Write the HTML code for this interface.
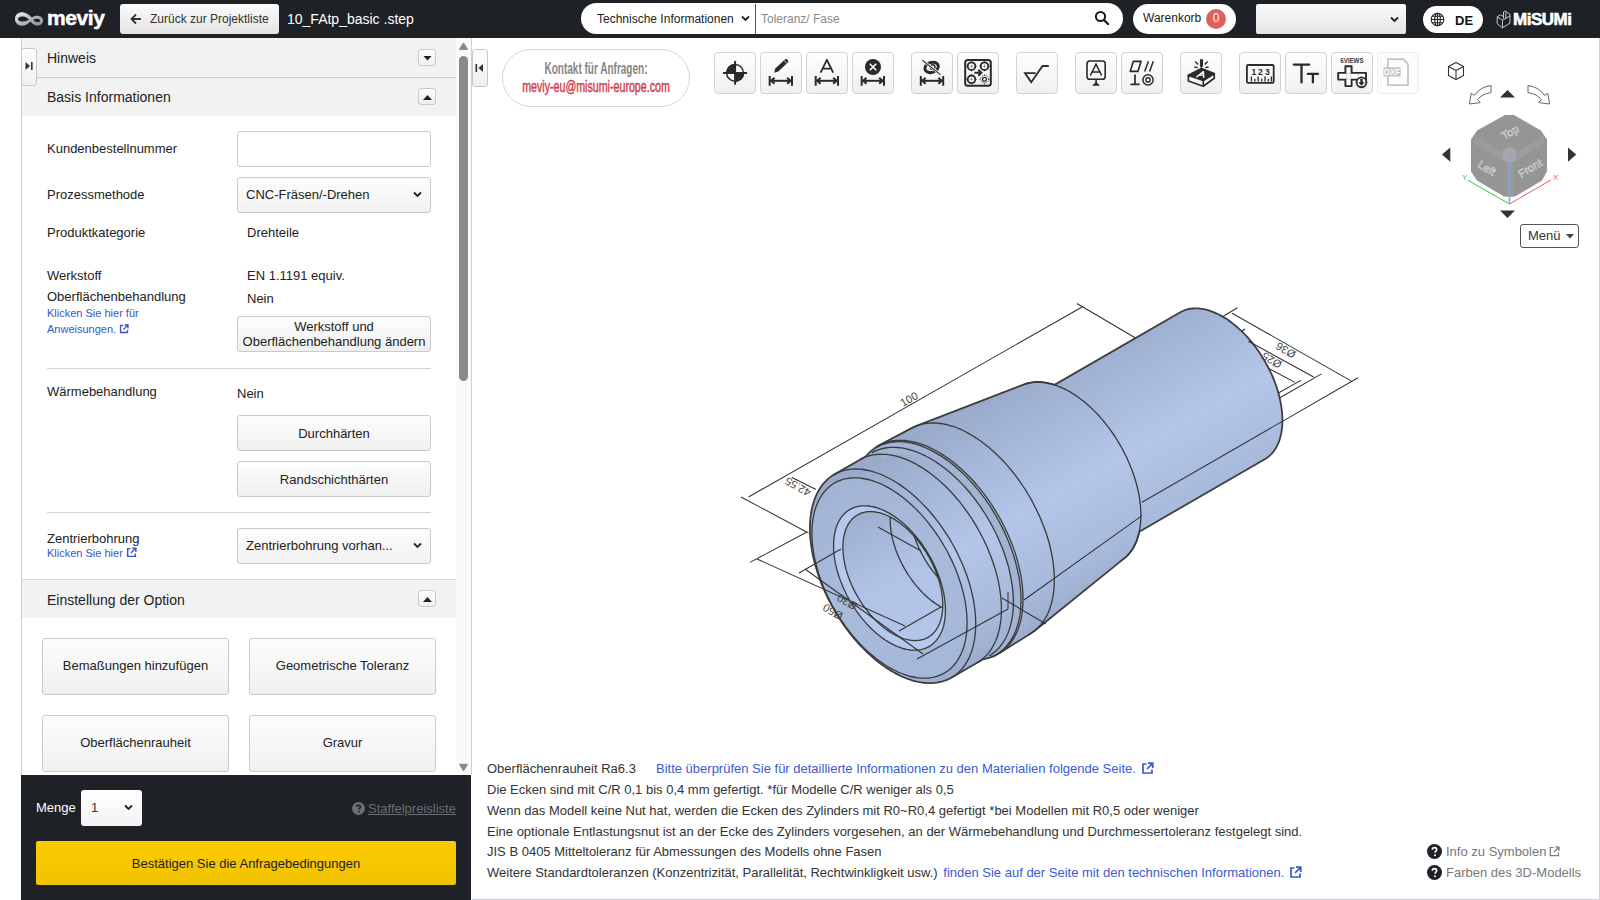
<!DOCTYPE html>
<html><head><meta charset="utf-8">
<style>
*{box-sizing:border-box;margin:0;padding:0}
html,body{width:1600px;height:900px;overflow:hidden;background:#fff;font-family:"Liberation Sans",sans-serif;font-size:13px;color:#222}
.a{position:absolute}
.t{position:absolute;white-space:nowrap;line-height:16px;margin-top:1px}
#hdr{left:0;top:0;width:1600px;height:38px;background:#1e2126}
.btn{position:absolute;border:1px solid #c9c9cf;border-radius:3px;background:linear-gradient(#fdfdfd,#f0f0f0);text-align:center;color:#222}
.sel{position:absolute;border:1px solid #c9c9d1;border-radius:3px;background:linear-gradient(#fdfdfd,#f1f1f1)}
.hl{position:absolute;height:1px;background:#d2d2d6}
.lnk{color:#3755c9}
</style></head><body>

<!-- HEADER -->
<div id="hdr" class="a">
  <!-- meviy logo -->
  <svg class="a" style="left:0;top:0" width="50" height="38" viewBox="0 0 50 38">
    <defs><linearGradient id="lg" x1="0" y1="0" x2="1" y2="1"><stop offset="0" stop-color="#f2f2f2"/><stop offset="0.5" stop-color="#b8b8b8"/><stop offset="1" stop-color="#8e8e8e"/></linearGradient></defs>
    <path fill-rule="evenodd" fill="url(#lg)" d="M15 19C15 13.5 20 11.5 24 12.5 28 13.5 30 16 32 17.5 34 16 36.5 15.5 39 16 42 16.8 43.5 19 43 21.5 42.5 24.5 39.5 26 36.5 25.5 33.5 25 32 23 30.5 21.5 28 24 25 26 21.5 25.8 17.5 25.5 15 22.5 15 19ZM18 19.3C18 17.3 20.5 16.4 23 16.6 25.5 16.8 27.5 18.3 29 19.6 27.5 20.8 25.5 21.6 23 21.6 20.5 21.6 18 21 18 19.3ZM33.2 19.8C34.7 18.8 36.6 18.6 38.5 19 40 19.4 40.5 20.5 39.8 21.5 39 22.3 37 22.4 35.5 21.8 34.5 21.4 33.8 20.6 33.2 19.8Z"/>
  </svg>
  <div class="t" style="left:47px;top:6px;font-size:21px;line-height:22px;font-weight:700;color:#fff;letter-spacing:-0.4px;-webkit-text-stroke:0.5px #fff">meviy</div>
  <div class="a" style="left:120px;top:4px;width:159px;height:30px;border-radius:3px;background:linear-gradient(#fbfbfb,#e3e3e3)"></div>
  <svg class="a" style="left:130px;top:13px" width="12" height="12" viewBox="0 0 12 12"><path d="M11 6H2M6 1.5L1.5 6 6 10.5" fill="none" stroke="#333" stroke-width="1.8"/></svg>
  <div class="t" style="left:150px;top:10px;font-size:12px;color:#333">Zurück zur Projektliste</div>
  <div class="t" style="left:287px;top:10px;font-size:14px;color:#fff">10_FAtp_basic .step</div>

  <!-- search -->
  <div class="a" style="left:581px;top:3px;width:542px;height:31px;border-radius:16px;background:#fff"></div>
  <div class="t" style="left:597px;top:10px;font-size:12px;color:#222">Technische Informationen</div>
  <svg class="a" style="left:741px;top:15px" width="9" height="7" viewBox="0 0 9 7"><path d="M1 1.5L4.5 5 8 1.5" fill="none" stroke="#222" stroke-width="1.8"/></svg>
  <div class="a" style="left:755px;top:4px;width:1px;height:30px;background:#555"></div>
  <div class="t" style="left:761px;top:10px;font-size:12px;color:#8a8a8a">Toleranz/ Fase</div>
  <svg class="a" style="left:1094px;top:10px" width="16" height="16" viewBox="0 0 16 16"><circle cx="6.5" cy="6.5" r="4.6" fill="none" stroke="#1b1b1b" stroke-width="2"/><path d="M10 10L14 14" stroke="#1b1b1b" stroke-width="2.4" stroke-linecap="round"/></svg>

  <!-- cart -->
  <div class="a" style="left:1133px;top:4px;width:103px;height:30px;border-radius:15px;background:#fff"></div>
  <div class="t" style="left:1143px;top:9px;font-size:12px;color:#222">Warenkorb</div>
  <div class="a" style="left:1206px;top:9px;width:20px;height:20px;border-radius:10px;background:#e06060"></div>
  <div class="t" style="left:1206px;top:9px;width:20px;text-align:center;font-size:12px;color:#fff">0</div>

  <!-- empty select -->
  <div class="a" style="left:1256px;top:4px;width:150px;height:30px;border-radius:2px;background:linear-gradient(#fafafa,#e4e4e4)"></div>
  <svg class="a" style="left:1390px;top:16px" width="9" height="7" viewBox="0 0 9 7"><path d="M1 1.5L4.5 5 8 1.5" fill="none" stroke="#222" stroke-width="1.8"/></svg>

  <!-- lang -->
  <div class="a" style="left:1423px;top:6px;width:60px;height:27px;border-radius:14px;background:#fff"></div>
  <svg class="a" style="left:1430px;top:12px" width="15" height="15" viewBox="0 0 15 15"><g fill="none" stroke="#222" stroke-width="1.1"><circle cx="7.5" cy="7.5" r="6.3"/><ellipse cx="7.5" cy="7.5" rx="2.8" ry="6.3"/><path d="M7.5 1.2V13.8M1.2 7.5H13.8M2.2 4.2H12.8M2.2 10.8H12.8"/></g></svg>
  <div class="t" style="left:1455px;top:12px;font-size:13px;font-weight:700;color:#111">DE</div>

  <!-- misumi -->
  <svg class="a" style="left:1490px;top:5px" width="24" height="28" viewBox="1490 5 24 28"><g fill="none" stroke="#d8d8d8" stroke-width="0.9" stroke-linejoin="round"><path d="M1497.2 16.9L1502.5 20.3 1510 15.8V23.1L1502.5 27.8 1497.2 23.8Z M1502.5 20.3V27.8 M1497.2 16.9L1500.6 14.8 1503.5 16.6 M1503.5 18.6V12L1505 11 1510 14.3V15.8 M1505.8 12.5V19"/></g></svg>
  <div class="t" style="left:1513px;top:10px;font-size:17px;line-height:18px;font-weight:700;color:#fff;letter-spacing:-0.5px;-webkit-text-stroke:0.6px #fff">MiSUMi</div>
</div>

<!-- LEFT PANEL -->
<div class="a" style="left:21px;top:38px;width:1px;height:862px;background:#cfcfd6"></div>
<div class="a" style="left:471px;top:38px;width:1px;height:737px;background:#cfcfdb"></div>
<div class="a" style="left:456px;top:38px;width:15px;height:737px;background:#fafafa"></div>
<!-- scrollbar -->
<svg class="a" style="left:456px;top:38px" width="15" height="737" viewBox="0 0 15 737">
  <path d="M3.8 11.2L7.5 5.5 11.2 11.2Z" fill="#8a8a8a" stroke="#8a8a8a" stroke-width="1.4" stroke-linejoin="round"/>
  <rect x="3" y="18" width="9" height="325" rx="4.5" fill="#8a8a8a"/>
  <path d="M3.8 726.5L7.5 732.5 11.2 726.5Z" fill="#8a8a8a" stroke="#8a8a8a" stroke-width="1.4" stroke-linejoin="round"/>
</svg>

<!-- Hinweis -->
<div class="a" style="left:22px;top:38px;width:434px;height:39px;background:#f2f2f2"></div>
<div class="hl" style="left:22px;top:77px;width:434px;background:#c9c9d3"></div>
<div class="a" style="left:22px;top:78px;width:434px;height:38px;background:#f2f2f2"></div>
<div class="t" style="left:47px;top:49px;font-size:14px;color:#222">Hinweis</div>
<div class="t" style="left:47px;top:88px;font-size:14px;color:#222">Basis Informationen</div>
<div class="btn" style="left:418px;top:49px;width:18px;height:17px;border-radius:3px"></div>
<svg class="a" style="left:423px;top:56px" width="9" height="5"><path d="M0.5 0H8.5L4.5 4.6Z" fill="#222"/></svg>
<div class="btn" style="left:418px;top:88px;width:18px;height:17px;border-radius:3px"></div>
<svg class="a" style="left:423px;top:95px" width="9" height="5"><path d="M0 5H9L4.5 0Z" fill="#222"/></svg>
<!-- sidebar toggle -->
<div class="btn" style="left:21px;top:48px;width:16px;height:38px;border-radius:3px;border-color:#c8c8c8"></div>
<svg class="a" style="left:25px;top:61px" width="9" height="10"><path d="M0.5 1L5 5 0.5 9Z" fill="#333"/><rect x="6" y="1" width="1.6" height="8" fill="#333"/></svg>

<!-- form -->
<div class="t" style="left:47px;top:140px">Kundenbestellnummer</div>
<div class="a" style="left:237px;top:131px;width:194px;height:36px;border:1px solid #c9c9d1;border-radius:3px;background:#fff"></div>
<div class="t" style="left:47px;top:186px">Prozessmethode</div>
<div class="sel" style="left:237px;top:177px;width:194px;height:36px"></div>
<div class="t" style="left:246px;top:186px">CNC-Fräsen/-Drehen</div>
<svg class="a" style="left:413px;top:191px" width="9" height="7" viewBox="0 0 9 7"><path d="M1 1.5L4.5 5 8 1.5" fill="none" stroke="#222" stroke-width="1.8"/></svg>
<div class="t" style="left:47px;top:224px">Produktkategorie</div>
<div class="t" style="left:247px;top:224px">Drehteile</div>
<div class="t" style="left:47px;top:267px">Werkstoff</div>
<div class="t" style="left:247px;top:267px">EN 1.1191 equiv.</div>
<div class="t" style="left:47px;top:288px">Oberflächenbehandlung</div>
<div class="t" style="left:247px;top:290px">Nein</div>
<div class="t lnk" style="left:47px;top:304px;font-size:11px">Klicken Sie hier für</div>
<div class="t lnk" style="left:47px;top:320px;font-size:11px">Anweisungen. <svg width="10" height="10" viewBox="0 0 10 10" style="vertical-align:-1px"><path d="M4 1.5H1.5V8.5H8.5V6M5.5 1H9V4.5M9 1L4.5 5.5" fill="none" stroke="#3755c9" stroke-width="1.3"/></svg></div>
<div class="btn" style="left:237px;top:316px;width:194px;height:36px"></div>
<div class="t" style="left:237px;top:318px;width:194px;text-align:center;line-height:15px;white-space:normal">Werkstoff und<br>Oberflächenbehandlung ändern</div>
<div class="hl" style="left:47px;top:368px;width:384px"></div>

<div class="t" style="left:47px;top:383px">Wärmebehandlung</div>
<div class="t" style="left:237px;top:385px">Nein</div>
<div class="btn" style="left:237px;top:415px;width:194px;height:36px"></div>
<div class="t" style="left:237px;top:425px;width:194px;text-align:center">Durchhärten</div>
<div class="btn" style="left:237px;top:461px;width:194px;height:36px"></div>
<div class="t" style="left:237px;top:471px;width:194px;text-align:center">Randschichthärten</div>
<div class="hl" style="left:47px;top:512px;width:384px"></div>

<div class="t" style="left:47px;top:530px">Zentrierbohrung</div>
<div class="t lnk" style="left:47px;top:544px;font-size:11px">Klicken Sie hier <svg width="11" height="11" viewBox="0 0 10 10" style="vertical-align:-1px"><path d="M4 1.5H1.5V8.5H8.5V6M5.5 1H9V4.5M9 1L4.5 5.5" fill="none" stroke="#3755c9" stroke-width="1.3"/></svg></div>
<div class="sel" style="left:237px;top:528px;width:194px;height:36px"></div>
<div class="t" style="left:246px;top:537px">Zentrierbohrung vorhan...</div>
<svg class="a" style="left:413px;top:542px" width="9" height="7" viewBox="0 0 9 7"><path d="M1 1.5L4.5 5 8 1.5" fill="none" stroke="#222" stroke-width="1.8"/></svg>

<div class="hl" style="left:22px;top:579px;width:434px;background:#d8d8dd"></div>
<div class="a" style="left:22px;top:580px;width:434px;height:38px;background:#f2f2f2"></div>
<div class="t" style="left:47px;top:591px;font-size:14px">Einstellung der Option</div>
<div class="btn" style="left:418px;top:590px;width:18px;height:17px;border-radius:3px"></div>
<svg class="a" style="left:423px;top:597px" width="9" height="5"><path d="M0 5H9L4.5 0Z" fill="#222"/></svg>

<div class="btn" style="left:42px;top:638px;width:187px;height:57px"></div>
<div class="t" style="left:42px;top:657px;width:187px;text-align:center">Bemaßungen hinzufügen</div>
<div class="btn" style="left:249px;top:638px;width:187px;height:57px"></div>
<div class="t" style="left:249px;top:657px;width:187px;text-align:center">Geometrische Toleranz</div>
<div class="btn" style="left:42px;top:715px;width:187px;height:57px"></div>
<div class="t" style="left:42px;top:734px;width:187px;text-align:center">Oberflächenrauheit</div>
<div class="btn" style="left:249px;top:715px;width:187px;height:57px"></div>
<div class="t" style="left:249px;top:734px;width:187px;text-align:center">Gravur</div>

<!-- footer -->
<div class="a" style="left:21px;top:775px;width:450px;height:125px;background:#1e2126"></div>
<div class="t" style="left:36px;top:799px;color:#fff">Menge</div>
<div class="a" style="left:81px;top:790px;width:61px;height:36px;border-radius:3px;background:linear-gradient(#fff,#f3f3f3)"></div>
<div class="t" style="left:91px;top:799px;color:#333">1</div>
<svg class="a" style="left:124px;top:804px" width="9" height="7" viewBox="0 0 9 7"><path d="M1 1.5L4.5 5 8 1.5" fill="none" stroke="#222" stroke-width="1.8"/></svg>
<svg class="a" style="left:352px;top:802px" width="13" height="13" viewBox="0 0 13 13"><circle cx="6.5" cy="6.5" r="6.5" fill="#6b6e72"/><path d="M4.6 5C4.6 3.8 5.5 3.2 6.5 3.2 7.6 3.2 8.4 3.9 8.4 4.9 8.4 6.1 6.9 6.2 6.9 7.6" fill="none" stroke="#1e2126" stroke-width="1.5"/><circle cx="6.9" cy="9.6" r="0.9" fill="#1e2126"/></svg>
<div class="t" style="left:368px;top:800px;color:#6b6e72;text-decoration:underline">Staffelpreisliste</div>
<div class="a" style="left:36px;top:841px;width:420px;height:44px;border-radius:2px;background:linear-gradient(#fdca00,#f0c300)"></div>
<div class="t" style="left:36px;top:855px;width:420px;text-align:center;color:#222">Bestätigen Sie die Anfragebedingungen</div>

<!-- VIEWER -->
<svg class="a" style="left:0;top:0" width="1600" height="900" viewBox="0 0 1600 900">
<defs>
<linearGradient id="bodyg" gradientUnits="userSpaceOnUse" x1="996.1" y1="378.1" x2="1115.9" y2="585.7"><stop offset="0" stop-color="#97a8c8"/><stop offset="0.3" stop-color="#a7b9da"/><stop offset="0.55" stop-color="#b3c6e9"/><stop offset="0.85" stop-color="#a8badb"/><stop offset="1" stop-color="#9aabcb"/></linearGradient>
<linearGradient id="faceg" gradientUnits="userSpaceOnUse" x1="816.2" y1="451.1" x2="962.8" y2="704.9"><stop offset="0" stop-color="#a0b1d1"/><stop offset="0.5" stop-color="#a9bbdc"/><stop offset="1" stop-color="#a4b6d7"/></linearGradient>
<linearGradient id="boreg" gradientUnits="userSpaceOnUse" x1="842.9" y1="497.3" x2="936.1" y2="658.7"><stop offset="0" stop-color="#98a9c9"/><stop offset="0.5" stop-color="#b0c3e6"/><stop offset="1" stop-color="#b4c7ea"/></linearGradient>
<clipPath id="boreclip"><path d="M842.9 547.2 842.9 545.2 843.0 543.3 843.2 541.4 843.4 539.5 843.6 537.7 844.0 535.9 844.4 534.1 844.8 532.5 845.3 530.8 845.9 529.3 846.5 527.7 847.2 526.3 847.9 524.9 848.7 523.5 849.6 522.3 850.5 521.1 851.4 519.9 852.4 518.8 853.5 517.8 854.6 516.9 855.7 516.1 856.9 515.3 858.1 514.6 859.4 513.9 860.7 513.4 862.1 512.9 863.5 512.5 864.9 512.1 866.4 511.9 867.9 511.7 869.4 511.6 870.9 511.6 872.5 511.7 874.1 511.8 875.7 512.0 877.4 512.3 879.1 512.7 880.7 513.1 882.4 513.7 884.2 514.3 885.9 515.0 887.6 515.7 889.3 516.5 891.1 517.4 892.8 518.4 894.6 519.4 896.3 520.6 898.1 521.7 899.8 523.0 901.5 524.3 903.2 525.7 904.9 527.1 906.6 528.6 908.3 530.1 909.9 531.7 911.5 533.4 913.1 535.1 914.7 536.9 916.3 538.7 917.8 540.5 919.3 542.4 920.8 544.4 922.2 546.4 923.6 548.4 924.9 550.4 926.3 552.5 927.5 554.6 928.8 556.8 929.9 558.9 931.1 561.1 932.2 563.3 933.2 565.5 934.2 567.7 935.2 570.0 936.1 572.2 936.9 574.5 937.7 576.7 938.5 579.0 939.1 581.2 939.8 583.4 940.3 585.7 940.8 587.9 941.3 590.1 941.7 592.3 942.0 594.5 942.3 596.6 942.5 598.7 942.7 600.8 942.7 602.9 942.8 604.9 942.7 606.9 942.7 608.9 942.5 610.8 942.3 612.7 942.0 614.5 941.7 616.3 941.3 618.0 940.8 619.7 940.3 621.3 939.8 622.9 939.1 624.4 938.5 625.9 937.7 627.3 936.9 628.6 936.1 629.9 935.2 631.1 934.2 632.2 933.2 633.3 932.2 634.3 931.1 635.2 929.9 636.1 928.8 636.9 927.5 637.6 926.3 638.2 924.9 638.8 923.6 639.3 922.2 639.7 920.8 640.0 919.3 640.3 917.8 640.4 916.3 640.5 914.7 640.6 913.1 640.5 911.5 640.4 909.9 640.1 908.3 639.8 906.6 639.5 904.9 639.0 903.2 638.5 901.5 637.9 899.8 637.2 898.1 636.5 896.3 635.6 894.6 634.7 892.8 633.8 891.1 632.7 889.3 631.6 887.6 630.4 885.9 629.2 884.2 627.9 882.4 626.5 880.7 625.1 879.1 623.6 877.4 622.0 875.7 620.4 874.1 618.8 872.5 617.0 870.9 615.3 869.4 613.5 867.9 611.6 866.4 609.7 864.9 607.8 863.5 605.8 862.1 603.8 860.7 601.7 859.4 599.6 858.1 597.5 856.9 595.4 855.7 593.2 854.6 591.1 853.5 588.9 852.4 586.6 851.4 584.4 850.5 582.2 849.6 579.9 848.7 577.7 847.9 575.4 847.2 573.2 846.5 570.9 845.9 568.7 845.3 566.5 844.8 564.3 844.4 562.0 844.0 559.9 843.6 557.7 843.4 555.5 843.2 553.4 843.0 551.3 842.9 549.3 842.9 547.2Z"/></clipPath>
</defs>
<path d="M1190.7 308.7 1189.0 309.0 1187.3 309.4 1185.6 309.9 1184.0 310.5 1182.4 311.2 1180.9 311.9 1179.4 312.8 1054.5 384.9 1052.4 384.2 1050.0 383.6 1047.6 383.0 1045.3 382.6 1043.0 382.3 1040.7 382.1 1038.4 382.0 1036.2 382.0 1034.0 382.2 1031.9 382.4 1029.8 382.8 1027.8 383.2 1025.8 383.8 1023.8 384.5 916.5 425.9 914.3 426.9 912.1 427.9 879.1 445.3 877.0 446.6 875.0 447.9 873.1 449.4 871.2 450.9 869.4 452.6 868.0 454.0 866.3 455.8 866.0 456.2 833.2 475.1 831.2 476.4 829.3 477.9 827.5 479.4 825.8 481.1 824.1 482.9 822.5 484.7 821.0 486.8 819.6 488.9 818.3 491.1 817.1 493.4 816.0 495.8 814.9 498.3 814.0 501.0 813.1 503.7 812.4 506.5 811.7 509.3 811.2 512.3 810.7 515.3 810.4 518.5 810.1 521.6 810.0 524.9 809.9 528.2 810.0 531.6 810.1 535.0 810.4 538.5 810.7 542.0 811.2 545.6 811.7 549.2 812.4 552.8 813.1 556.5 814.0 560.1 814.9 563.8 816.0 567.6 817.1 571.3 818.3 575.0 819.6 578.8 821.0 582.5 822.5 586.2 824.1 589.9 825.8 593.6 827.5 597.3 829.3 600.9 831.2 604.6 833.2 608.1 835.2 611.7 837.3 615.2 839.5 618.6 841.8 622.1 844.1 625.4 846.5 628.7 848.9 631.9 851.4 635.1 853.9 638.1 856.5 641.1 859.1 644.1 861.8 646.9 864.5 649.7 867.2 652.3 870.0 654.9 872.8 657.4 875.6 659.8 878.4 662.1 881.3 664.2 884.2 666.3 887.0 668.2 889.9 670.1 892.8 671.8 895.7 673.4 898.6 674.9 901.5 676.3 904.4 677.5 907.2 678.7 910.1 679.7 912.9 680.6 915.7 681.3 918.5 681.9 921.2 682.4 923.9 682.8 926.6 683.0 929.2 683.1 931.8 683.1 934.3 682.9 936.8 682.6 939.2 682.2 941.6 681.7 943.9 681.0 946.1 680.2 948.3 679.3 950.4 678.2 983.2 659.3 983.7 659.2 986.2 658.6 988.0 658.1 990.4 657.4 992.7 656.6 994.9 655.6 997.1 654.5 999.2 653.3 1030.8 633.4 1032.8 632.1 1034.7 630.7 1124.2 558.4 1125.8 557.1 1127.3 555.6 1128.7 554.1 1130.1 552.5 1131.4 550.8 1132.6 548.9 1133.7 547.0 1134.7 545.0 1135.7 543.0 1136.6 540.8 1137.4 538.5 1138.1 536.2 1138.8 533.8 1139.3 531.7 1265.6 458.7 1267.0 457.8 1268.4 456.7 1269.7 455.6 1271.0 454.4 1272.2 453.1 1273.3 451.8 1274.4 450.3 1275.4 448.8 1276.4 447.2 1277.2 445.5 1278.1 443.8 1278.8 441.9 1279.5 440.0 1280.1 438.1 1280.6 436.1 1281.1 434.0 1281.5 431.8 1281.8 429.7 1282.1 427.4 1282.3 425.1 1282.4 422.7 1282.4 420.4 1282.4 417.9 1282.3 415.4 1282.1 412.9 1281.8 410.4 1281.5 407.8 1281.1 405.2 1280.6 402.6 1280.1 399.9 1279.5 397.3 1278.8 394.6 1278.1 391.9 1277.2 389.2 1276.4 386.5 1275.4 383.8 1274.4 381.1 1273.3 378.4 1272.2 375.7 1271.0 373.1 1269.7 370.4 1268.4 367.8 1267.0 365.2 1265.6 362.6 1264.1 360.0 1262.6 357.5 1261.0 355.0 1259.4 352.5 1257.7 350.1 1256.0 347.7 1254.2 345.4 1252.5 343.1 1250.6 340.9 1248.8 338.7 1246.9 336.6 1244.9 334.5 1243.0 332.5 1241.0 330.6 1239.0 328.8 1237.0 327.0 1234.9 325.2 1232.9 323.6 1230.8 322.0 1228.8 320.5 1226.7 319.1 1224.6 317.8 1222.5 316.5 1220.4 315.4 1218.3 314.3 1216.2 313.3 1214.1 312.4 1212.1 311.6 1210.0 310.9 1208.0 310.2 1206.0 309.7 1204.0 309.2 1202.0 308.9 1200.0 308.6 1198.1 308.4 1196.2 308.4 1194.3 308.4 1192.5 308.5 1190.7 308.7Z" fill="url(#bodyg)"/>
<path d="M876.6 447.3 878.8 446.2 881.0 445.1 883.2 444.3 885.6 443.5 887.9 442.9 890.4 442.4 892.9 442.0 895.4 441.8 898.1 441.7 900.7 441.7 903.4 441.9 906.1 442.2 908.9 442.7 911.7 443.2 914.6 443.9 917.4 444.7 920.3 445.7 923.2 446.8 926.1 448.0 929.1 449.3 932.0 450.8 935.0 452.4 937.9 454.1 940.9 455.9 943.8 457.9 946.8 459.9 949.7 462.1 952.6 464.3 955.5 466.7 958.3 469.2 961.2 471.8 964.0 474.4 966.8 477.2 969.5 480.1 972.2 483.0 974.8 486.0 977.5 489.1 980.0 492.3 982.5 495.6 985.0 498.9 987.4 502.3 989.7 505.7 991.9 509.2 994.1 512.8 996.3 516.4 998.3 520.0 1000.3 523.7 1002.2 527.4 1004.0 531.1 1005.7 534.9 1007.4 538.7 1008.9 542.4 1010.4 546.3 1011.8 550.1 1013.1 553.9 1014.3 557.7 1015.4 561.5 1016.4 565.3 1017.3 569.0 1018.1 572.8 1018.9 576.5 1019.5 580.2 1020.0 583.8 1020.4 587.5 1020.7 591.0 1020.9 594.5 1021.0 598.0 1021.0 601.4 1020.9 604.8 1020.7 608.1 1020.4 611.3 1020.0 614.4 1019.5 617.5 1018.9 620.4 1018.1 623.3 1017.3 626.1 1016.4 628.9 1015.4 631.5 1014.3 634.0 1013.1 636.4 1011.8 638.7 1010.4 640.9 1008.9 643.0 1007.4 645.0 1005.7 646.9 1004.0 648.7 1002.2 650.3 1000.3 651.8 998.3 653.2 996.3 654.5 989.4 642.7 991.2 641.5 993.0 640.3 994.7 639.0 996.3 637.5 997.8 635.9 999.3 634.3 1000.7 632.5 1002.0 630.7 1003.2 628.7 1004.4 626.7 1005.4 624.5 1006.4 622.3 1007.3 620.0 1008.1 617.6 1008.8 615.1 1009.5 612.5 1010.0 609.9 1010.5 607.1 1010.8 604.4 1011.1 601.5 1011.3 598.6 1011.4 595.7 1011.4 592.6 1011.3 589.6 1011.1 586.4 1010.8 583.3 1010.5 580.1 1010.0 576.8 1009.5 573.6 1008.8 570.3 1008.1 567.0 1007.3 563.6 1006.4 560.3 1005.4 556.9 1004.4 553.5 1003.2 550.2 1002.0 546.8 1000.7 543.4 999.3 540.1 997.8 536.7 996.3 533.4 994.7 530.1 993.0 526.8 991.2 523.5 989.4 520.3 987.5 517.1 985.6 514.0 983.6 510.9 981.5 507.8 979.4 504.8 977.3 501.9 975.0 499.0 972.8 496.2 970.5 493.4 968.1 490.8 965.7 488.2 963.3 485.6 960.8 483.2 958.4 480.8 955.8 478.5 953.3 476.3 950.7 474.2 948.2 472.2 945.6 470.3 943.0 468.5 940.4 466.8 937.8 465.1 935.1 463.6 932.5 462.2 929.9 460.9 927.3 459.8 924.7 458.7 922.2 457.7 919.6 456.9 917.1 456.1 914.5 455.5 912.1 455.0 909.6 454.6 907.2 454.4 904.8 454.2 902.4 454.2 900.1 454.3 897.9 454.5 895.6 454.8 893.5 455.2 891.4 455.8 889.3 456.4 887.3 457.2 885.4 458.1 883.5 459.1 876.6 447.3Z" fill="#a2b3d3"/>
<path d="M811.9 533.2 812.0 530.1 812.1 527.1 812.3 524.1 812.7 521.2 813.1 518.3 813.6 515.6 814.2 512.9 814.9 510.2 815.7 507.7 816.6 505.3 817.6 502.9 818.6 500.6 819.8 498.5 821.0 496.4 822.3 494.4 823.7 492.5 825.2 490.8 826.7 489.1 828.4 487.5 830.1 486.1 831.8 484.8 833.7 483.5 835.6 482.4 837.6 481.4 839.6 480.6 841.7 479.8 843.9 479.2 846.1 478.7 848.4 478.3 850.7 478.0 853.1 477.9 855.5 477.8 857.9 477.9 860.4 478.2 863.0 478.5 865.5 479.0 868.1 479.5 870.7 480.2 873.4 481.1 876.0 482.0 878.7 483.0 881.4 484.2 884.1 485.5 886.8 486.9 889.5 488.4 892.2 490.0 894.9 491.8 897.6 493.6 900.3 495.5 903.0 497.6 905.6 499.7 908.3 501.9 910.9 504.2 913.5 506.6 916.0 509.1 918.6 511.7 921.1 514.4 923.5 517.1 925.9 519.9 928.3 522.8 930.6 525.8 932.9 528.8 935.1 531.9 937.3 535.0 939.4 538.2 941.4 541.4 943.4 544.7 945.3 548.0 947.2 551.3 948.9 554.7 950.6 558.1 952.3 561.6 953.8 565.0 955.3 568.5 956.7 572.0 958.0 575.5 959.2 579.0 960.4 582.5 961.4 586.0 962.4 589.5 963.3 592.9 964.1 596.4 964.8 599.8 965.4 603.2 965.9 606.6 966.3 609.9 966.7 613.2 966.9 616.4 967.0 619.6 967.1 622.8 967.0 625.9 966.9 628.9 966.7 631.9 966.3 634.8 965.9 637.7 965.4 640.4 964.8 643.1 964.1 645.8 963.3 648.3 962.4 650.7 961.4 653.1 960.4 655.4 959.2 657.5 958.0 659.6 956.7 661.6 955.3 663.5 953.8 665.2 952.3 666.9 950.6 668.5 948.9 669.9 947.2 671.2 945.3 672.5 943.4 673.6 941.4 674.6 939.4 675.4 937.3 676.2 935.1 676.8 932.9 677.3 930.6 677.7 928.3 678.0 925.9 678.1 923.5 678.2 921.1 678.1 918.6 677.8 916.0 677.5 913.5 677.0 910.9 676.5 908.3 675.8 905.6 674.9 903.0 674.0 900.3 673.0 897.6 671.8 894.9 670.5 892.2 669.1 889.5 667.6 886.8 666.0 884.1 664.2 881.4 662.4 878.7 660.5 876.0 658.4 873.4 656.3 870.7 654.1 868.1 651.8 865.5 649.4 863.0 646.9 860.4 644.3 857.9 641.6 855.5 638.9 853.1 636.1 850.7 633.2 848.4 630.2 846.1 627.2 843.9 624.1 841.7 621.0 839.6 617.8 837.6 614.6 835.6 611.3 833.7 608.0 831.8 604.7 830.1 601.3 828.4 597.9 826.7 594.4 825.2 591.0 823.7 587.5 822.3 584.0 821.0 580.5 819.8 577.0 818.6 573.5 817.6 570.0 816.6 566.5 815.7 563.1 814.9 559.6 814.2 556.2 813.6 552.8 813.1 549.4 812.7 546.1 812.3 542.8 812.1 539.6 812.0 536.4 811.9 533.2Z" fill="url(#faceg)"/>
<path d="M833.6 545.7 833.6 543.5 833.7 541.3 833.9 539.1 834.1 537.0 834.4 535.0 834.8 533.0 835.2 531.0 835.7 529.1 836.3 527.3 836.9 525.6 837.6 523.9 838.4 522.2 839.2 520.7 840.1 519.2 841.1 517.7 842.1 516.4 843.1 515.1 844.2 513.9 845.4 512.8 846.6 511.7 847.9 510.8 849.3 509.9 850.6 509.1 852.1 508.4 853.5 507.8 855.1 507.2 856.6 506.8 858.2 506.4 859.9 506.1 861.5 505.9 863.2 505.8 865.0 505.8 866.7 505.9 868.5 506.0 870.4 506.3 872.2 506.6 874.1 507.0 876.0 507.5 877.9 508.1 879.8 508.8 881.7 509.5 883.7 510.4 885.6 511.3 887.5 512.3 889.5 513.4 891.5 514.6 893.4 515.8 895.3 517.1 897.3 518.5 899.2 520.0 901.1 521.5 903.0 523.1 904.9 524.8 906.8 526.5 908.6 528.3 910.5 530.2 912.3 532.1 914.0 534.1 915.8 536.1 917.5 538.2 919.1 540.3 920.8 542.5 922.4 544.7 923.9 547.0 925.5 549.3 926.9 551.6 928.4 554.0 929.7 556.4 931.1 558.8 932.4 561.2 933.6 563.7 934.8 566.2 935.9 568.7 936.9 571.2 937.9 573.7 938.9 576.2 939.8 578.7 940.6 581.2 941.4 583.7 942.1 586.3 942.7 588.8 943.3 591.2 943.8 593.7 944.2 596.2 944.6 598.6 944.9 601.0 945.1 603.4 945.3 605.7 945.4 608.0 945.4 610.3 945.4 612.5 945.3 614.7 945.1 616.9 944.9 619.0 944.6 621.0 944.2 623.0 943.8 625.0 943.3 626.9 942.7 628.7 942.1 630.4 941.4 632.1 940.6 633.8 939.8 635.3 938.9 636.8 937.9 638.3 936.9 639.6 935.9 640.9 934.8 642.1 933.6 643.2 932.4 644.3 931.1 645.2 929.7 646.1 928.4 646.9 926.9 647.6 925.5 648.2 923.9 648.8 922.4 649.2 920.8 649.6 919.1 649.9 917.5 650.1 915.8 650.2 914.0 650.2 912.3 650.1 910.5 650.0 908.6 649.7 906.8 649.4 904.9 649.0 903.0 648.5 901.1 647.9 899.2 647.2 897.3 646.5 895.3 645.6 893.4 644.7 891.5 643.7 889.5 642.6 887.5 641.4 885.6 640.2 883.7 638.9 881.7 637.5 879.8 636.0 877.9 634.5 876.0 632.9 874.1 631.2 872.2 629.5 870.4 627.7 868.5 625.8 866.7 623.9 865.0 621.9 863.2 619.9 861.5 617.8 859.9 615.7 858.2 613.5 856.6 611.3 855.1 609.0 853.5 606.7 852.1 604.4 850.6 602.0 849.3 599.6 847.9 597.2 846.6 594.8 845.4 592.3 844.2 589.8 843.1 587.3 842.1 584.8 841.1 582.3 840.1 579.8 839.2 577.3 838.4 574.8 837.6 572.3 836.9 569.7 836.3 567.2 835.7 564.8 835.2 562.3 834.8 559.8 834.4 557.4 834.1 555.0 833.9 552.6 833.7 550.3 833.6 548.0 833.6 545.7Z" fill="#b6c9ec"/>
<path d="M842.9 547.2 842.9 545.2 843.0 543.3 843.2 541.4 843.4 539.5 843.6 537.7 844.0 535.9 844.4 534.1 844.8 532.5 845.3 530.8 845.9 529.3 846.5 527.7 847.2 526.3 847.9 524.9 848.7 523.5 849.6 522.3 850.5 521.1 851.4 519.9 852.4 518.8 853.5 517.8 854.6 516.9 855.7 516.1 856.9 515.3 858.1 514.6 859.4 513.9 860.7 513.4 862.1 512.9 863.5 512.5 864.9 512.1 866.4 511.9 867.9 511.7 869.4 511.6 870.9 511.6 872.5 511.7 874.1 511.8 875.7 512.0 877.4 512.3 879.1 512.7 880.7 513.1 882.4 513.7 884.2 514.3 885.9 515.0 887.6 515.7 889.3 516.5 891.1 517.4 892.8 518.4 894.6 519.4 896.3 520.6 898.1 521.7 899.8 523.0 901.5 524.3 903.2 525.7 904.9 527.1 906.6 528.6 908.3 530.1 909.9 531.7 911.5 533.4 913.1 535.1 914.7 536.9 916.3 538.7 917.8 540.5 919.3 542.4 920.8 544.4 922.2 546.4 923.6 548.4 924.9 550.4 926.3 552.5 927.5 554.6 928.8 556.8 929.9 558.9 931.1 561.1 932.2 563.3 933.2 565.5 934.2 567.7 935.2 570.0 936.1 572.2 936.9 574.5 937.7 576.7 938.5 579.0 939.1 581.2 939.8 583.4 940.3 585.7 940.8 587.9 941.3 590.1 941.7 592.3 942.0 594.5 942.3 596.6 942.5 598.7 942.7 600.8 942.7 602.9 942.8 604.9 942.7 606.9 942.7 608.9 942.5 610.8 942.3 612.7 942.0 614.5 941.7 616.3 941.3 618.0 940.8 619.7 940.3 621.3 939.8 622.9 939.1 624.4 938.5 625.9 937.7 627.3 936.9 628.6 936.1 629.9 935.2 631.1 934.2 632.2 933.2 633.3 932.2 634.3 931.1 635.2 929.9 636.1 928.8 636.9 927.5 637.6 926.3 638.2 924.9 638.8 923.6 639.3 922.2 639.7 920.8 640.0 919.3 640.3 917.8 640.4 916.3 640.5 914.7 640.6 913.1 640.5 911.5 640.4 909.9 640.1 908.3 639.8 906.6 639.5 904.9 639.0 903.2 638.5 901.5 637.9 899.8 637.2 898.1 636.5 896.3 635.6 894.6 634.7 892.8 633.8 891.1 632.7 889.3 631.6 887.6 630.4 885.9 629.2 884.2 627.9 882.4 626.5 880.7 625.1 879.1 623.6 877.4 622.0 875.7 620.4 874.1 618.8 872.5 617.0 870.9 615.3 869.4 613.5 867.9 611.6 866.4 609.7 864.9 607.8 863.5 605.8 862.1 603.8 860.7 601.7 859.4 599.6 858.1 597.5 856.9 595.4 855.7 593.2 854.6 591.1 853.5 588.9 852.4 586.6 851.4 584.4 850.5 582.2 849.6 579.9 848.7 577.7 847.9 575.4 847.2 573.2 846.5 570.9 845.9 568.7 845.3 566.5 844.8 564.3 844.4 562.0 844.0 559.9 843.6 557.7 843.4 555.5 843.2 553.4 843.0 551.3 842.9 549.3 842.9 547.2Z" fill="url(#boreg)"/>
<path d="M1190.7 308.7 1189.0 309.0 1187.3 309.4 1185.6 309.9 1184.0 310.5 1182.4 311.2 1180.9 311.9 1179.4 312.8 1054.5 384.9 1052.4 384.2 1050.0 383.6 1047.6 383.0 1045.3 382.6 1043.0 382.3 1040.7 382.1 1038.4 382.0 1036.2 382.0 1034.0 382.2 1031.9 382.4 1029.8 382.8 1027.8 383.2 1025.8 383.8 1023.8 384.5 916.5 425.9 914.3 426.9 912.1 427.9 879.1 445.3 877.0 446.6 875.0 447.9 873.1 449.4 871.2 450.9 869.4 452.6 868.0 454.0 866.3 455.8 866.0 456.2 833.2 475.1 831.2 476.4 829.3 477.9 827.5 479.4 825.8 481.1 824.1 482.9 822.5 484.7 821.0 486.8 819.6 488.9 818.3 491.1 817.1 493.4 816.0 495.8 814.9 498.3 814.0 501.0 813.1 503.7 812.4 506.5 811.7 509.3 811.2 512.3 810.7 515.3 810.4 518.5 810.1 521.6 810.0 524.9 809.9 528.2 810.0 531.6 810.1 535.0 810.4 538.5 810.7 542.0 811.2 545.6 811.7 549.2 812.4 552.8 813.1 556.5 814.0 560.1 814.9 563.8 816.0 567.6 817.1 571.3 818.3 575.0 819.6 578.8 821.0 582.5 822.5 586.2 824.1 589.9 825.8 593.6 827.5 597.3 829.3 600.9 831.2 604.6 833.2 608.1 835.2 611.7 837.3 615.2 839.5 618.6 841.8 622.1 844.1 625.4 846.5 628.7 848.9 631.9 851.4 635.1 853.9 638.1 856.5 641.1 859.1 644.1 861.8 646.9 864.5 649.7 867.2 652.3 870.0 654.9 872.8 657.4 875.6 659.8 878.4 662.1 881.3 664.2 884.2 666.3 887.0 668.2 889.9 670.1 892.8 671.8 895.7 673.4 898.6 674.9 901.5 676.3 904.4 677.5 907.2 678.7 910.1 679.7 912.9 680.6 915.7 681.3 918.5 681.9 921.2 682.4 923.9 682.8 926.6 683.0 929.2 683.1 931.8 683.1 934.3 682.9 936.8 682.6 939.2 682.2 941.6 681.7 943.9 681.0 946.1 680.2 948.3 679.3 950.4 678.2 983.2 659.3 983.7 659.2 986.2 658.6 988.0 658.1 990.4 657.4 992.7 656.6 994.9 655.6 997.1 654.5 999.2 653.3 1030.8 633.4 1032.8 632.1 1034.7 630.7 1124.2 558.4 1125.8 557.1 1127.3 555.6 1128.7 554.1 1130.1 552.5 1131.4 550.8 1132.6 548.9 1133.7 547.0 1134.7 545.0 1135.7 543.0 1136.6 540.8 1137.4 538.5 1138.1 536.2 1138.8 533.8 1139.3 531.7 1265.6 458.7 1267.0 457.8 1268.4 456.7 1269.7 455.6 1271.0 454.4 1272.2 453.1 1273.3 451.8 1274.4 450.3 1275.4 448.8 1276.4 447.2 1277.2 445.5 1278.1 443.8 1278.8 441.9 1279.5 440.0 1280.1 438.1 1280.6 436.1 1281.1 434.0 1281.5 431.8 1281.8 429.7 1282.1 427.4 1282.3 425.1 1282.4 422.7 1282.4 420.4 1282.4 417.9 1282.3 415.4 1282.1 412.9 1281.8 410.4 1281.5 407.8 1281.1 405.2 1280.6 402.6 1280.1 399.9 1279.5 397.3 1278.8 394.6 1278.1 391.9 1277.2 389.2 1276.4 386.5 1275.4 383.8 1274.4 381.1 1273.3 378.4 1272.2 375.7 1271.0 373.1 1269.7 370.4 1268.4 367.8 1267.0 365.2 1265.6 362.6 1264.1 360.0 1262.6 357.5 1261.0 355.0 1259.4 352.5 1257.7 350.1 1256.0 347.7 1254.2 345.4 1252.5 343.1 1250.6 340.9 1248.8 338.7 1246.9 336.6 1244.9 334.5 1243.0 332.5 1241.0 330.6 1239.0 328.8 1237.0 327.0 1234.9 325.2 1232.9 323.6 1230.8 322.0 1228.8 320.5 1226.7 319.1 1224.6 317.8 1222.5 316.5 1220.4 315.4 1218.3 314.3 1216.2 313.3 1214.1 312.4 1212.1 311.6 1210.0 310.9 1208.0 310.2 1206.0 309.7 1204.0 309.2 1202.0 308.9 1200.0 308.6 1198.1 308.4 1196.2 308.4 1194.3 308.4 1192.5 308.5 1190.7 308.7Z" fill="none" stroke="#3f3f3f" stroke-width="1.8" stroke-linejoin="round"/>
<path d="M811.9 533.2 812.0 530.1 812.1 527.1 812.3 524.1 812.7 521.2 813.1 518.3 813.6 515.6 814.2 512.9 814.9 510.2 815.7 507.7 816.6 505.3 817.6 502.9 818.6 500.6 819.8 498.5 821.0 496.4 822.3 494.4 823.7 492.5 825.2 490.8 826.7 489.1 828.4 487.5 830.1 486.1 831.8 484.8 833.7 483.5 835.6 482.4 837.6 481.4 839.6 480.6 841.7 479.8 843.9 479.2 846.1 478.7 848.4 478.3 850.7 478.0 853.1 477.9 855.5 477.8 857.9 477.9 860.4 478.2 863.0 478.5 865.5 479.0 868.1 479.5 870.7 480.2 873.4 481.1 876.0 482.0 878.7 483.0 881.4 484.2 884.1 485.5 886.8 486.9 889.5 488.4 892.2 490.0 894.9 491.8 897.6 493.6 900.3 495.5 903.0 497.6 905.6 499.7 908.3 501.9 910.9 504.2 913.5 506.6 916.0 509.1 918.6 511.7 921.1 514.4 923.5 517.1 925.9 519.9 928.3 522.8 930.6 525.8 932.9 528.8 935.1 531.9 937.3 535.0 939.4 538.2 941.4 541.4 943.4 544.7 945.3 548.0 947.2 551.3 948.9 554.7 950.6 558.1 952.3 561.6 953.8 565.0 955.3 568.5 956.7 572.0 958.0 575.5 959.2 579.0 960.4 582.5 961.4 586.0 962.4 589.5 963.3 592.9 964.1 596.4 964.8 599.8 965.4 603.2 965.9 606.6 966.3 609.9 966.7 613.2 966.9 616.4 967.0 619.6 967.1 622.8 967.0 625.9 966.9 628.9 966.7 631.9 966.3 634.8 965.9 637.7 965.4 640.4 964.8 643.1 964.1 645.8 963.3 648.3 962.4 650.7 961.4 653.1 960.4 655.4 959.2 657.5 958.0 659.6 956.7 661.6 955.3 663.5 953.8 665.2 952.3 666.9 950.6 668.5 948.9 669.9 947.2 671.2 945.3 672.5 943.4 673.6 941.4 674.6 939.4 675.4 937.3 676.2 935.1 676.8 932.9 677.3 930.6 677.7 928.3 678.0 925.9 678.1 923.5 678.2 921.1 678.1 918.6 677.8 916.0 677.5 913.5 677.0 910.9 676.5 908.3 675.8 905.6 674.9 903.0 674.0 900.3 673.0 897.6 671.8 894.9 670.5 892.2 669.1 889.5 667.6 886.8 666.0 884.1 664.2 881.4 662.4 878.7 660.5 876.0 658.4 873.4 656.3 870.7 654.1 868.1 651.8 865.5 649.4 863.0 646.9 860.4 644.3 857.9 641.6 855.5 638.9 853.1 636.1 850.7 633.2 848.4 630.2 846.1 627.2 843.9 624.1 841.7 621.0 839.6 617.8 837.6 614.6 835.6 611.3 833.7 608.0 831.8 604.7 830.1 601.3 828.4 597.9 826.7 594.4 825.2 591.0 823.7 587.5 822.3 584.0 821.0 580.5 819.8 577.0 818.6 573.5 817.6 570.0 816.6 566.5 815.7 563.1 814.9 559.6 814.2 556.2 813.6 552.8 813.1 549.4 812.7 546.1 812.3 542.8 812.1 539.6 812.0 536.4 811.9 533.2 M834.2 474.5 836.3 473.4 838.4 472.4 840.7 471.5 842.9 470.8 845.3 470.2 847.7 469.7 850.1 469.4 852.6 469.1 855.2 469.0 857.8 469.1 860.4 469.2 863.1 469.5 865.8 470.0 868.6 470.5 871.4 471.2 874.2 472.0 877.0 473.0 879.9 474.0 882.7 475.2 885.6 476.5 888.5 478.0 891.4 479.5 894.3 481.2 897.2 483.0 900.1 484.9 902.9 486.9 905.8 489.0 908.7 491.2 911.5 493.6 914.3 496.0 917.1 498.5 919.8 501.1 922.5 503.9 925.2 506.7 927.9 509.5 930.5 512.5 933.0 515.5 935.5 518.7 938.0 521.9 940.4 525.1 942.7 528.4 945.0 531.8 947.2 535.2 949.4 538.7 951.5 542.2 953.5 545.8 955.4 549.4 957.3 553.0 959.0 556.7 960.7 560.4 962.4 564.1 963.9 567.8 965.3 571.5 966.7 575.3 968.0 579.0 969.2 582.7 970.2 586.5 971.2 590.2 972.1 593.9 972.9 597.5 973.6 601.2 974.2 604.8 974.7 608.4 975.1 611.9 975.4 615.4 975.6 618.9 975.7 622.3 975.7 625.6 975.6 628.9 975.4 632.1 975.1 635.3 974.7 638.3 974.2 641.3 973.6 644.3 972.9 647.1 972.1 649.8 971.2 652.5 970.2 655.1 969.2 657.6 968.0 659.9 966.7 662.2 965.3 664.4 963.9 666.4 962.4 668.4 960.7 670.2 959.0 671.9 957.3 673.5 955.4 675.0 953.5 676.4 951.5 677.6 M833.6 545.7 833.6 543.5 833.7 541.3 833.9 539.1 834.1 537.0 834.4 535.0 834.8 533.0 835.2 531.0 835.7 529.1 836.3 527.3 836.9 525.6 837.6 523.9 838.4 522.2 839.2 520.7 840.1 519.2 841.1 517.7 842.1 516.4 843.1 515.1 844.2 513.9 845.4 512.8 846.6 511.7 847.9 510.8 849.3 509.9 850.6 509.1 852.1 508.4 853.5 507.8 855.1 507.2 856.6 506.8 858.2 506.4 859.9 506.1 861.5 505.9 863.2 505.8 865.0 505.8 866.7 505.9 868.5 506.0 870.4 506.3 872.2 506.6 874.1 507.0 876.0 507.5 877.9 508.1 879.8 508.8 881.7 509.5 883.7 510.4 885.6 511.3 887.5 512.3 889.5 513.4 891.5 514.6 893.4 515.8 895.3 517.1 897.3 518.5 899.2 520.0 901.1 521.5 903.0 523.1 904.9 524.8 906.8 526.5 908.6 528.3 910.5 530.2 912.3 532.1 914.0 534.1 915.8 536.1 917.5 538.2 919.1 540.3 920.8 542.5 922.4 544.7 923.9 547.0 925.5 549.3 926.9 551.6 928.4 554.0 929.7 556.4 931.1 558.8 932.4 561.2 933.6 563.7 934.8 566.2 935.9 568.7 936.9 571.2 937.9 573.7 938.9 576.2 939.8 578.7 940.6 581.2 941.4 583.7 942.1 586.3 942.7 588.8 943.3 591.2 943.8 593.7 944.2 596.2 944.6 598.6 944.9 601.0 945.1 603.4 945.3 605.7 945.4 608.0 945.4 610.3 945.4 612.5 945.3 614.7 945.1 616.9 944.9 619.0 944.6 621.0 944.2 623.0 943.8 625.0 943.3 626.9 942.7 628.7 942.1 630.4 941.4 632.1 940.6 633.8 939.8 635.3 938.9 636.8 937.9 638.3 936.9 639.6 935.9 640.9 934.8 642.1 933.6 643.2 932.4 644.3 931.1 645.2 929.7 646.1 928.4 646.9 926.9 647.6 925.5 648.2 923.9 648.8 922.4 649.2 920.8 649.6 919.1 649.9 917.5 650.1 915.8 650.2 914.0 650.2 912.3 650.1 910.5 650.0 908.6 649.7 906.8 649.4 904.9 649.0 903.0 648.5 901.1 647.9 899.2 647.2 897.3 646.5 895.3 645.6 893.4 644.7 891.5 643.7 889.5 642.6 887.5 641.4 885.6 640.2 883.7 638.9 881.7 637.5 879.8 636.0 877.9 634.5 876.0 632.9 874.1 631.2 872.2 629.5 870.4 627.7 868.5 625.8 866.7 623.9 865.0 621.9 863.2 619.9 861.5 617.8 859.9 615.7 858.2 613.5 856.6 611.3 855.1 609.0 853.5 606.7 852.1 604.4 850.6 602.0 849.3 599.6 847.9 597.2 846.6 594.8 845.4 592.3 844.2 589.8 843.1 587.3 842.1 584.8 841.1 582.3 840.1 579.8 839.2 577.3 838.4 574.8 837.6 572.3 836.9 569.7 836.3 567.2 835.7 564.8 835.2 562.3 834.8 559.8 834.4 557.4 834.1 555.0 833.9 552.6 833.7 550.3 833.6 548.0 833.6 545.7 M842.9 547.2 842.9 545.2 843.0 543.3 843.2 541.4 843.4 539.5 843.6 537.7 844.0 535.9 844.4 534.1 844.8 532.5 845.3 530.8 845.9 529.3 846.5 527.7 847.2 526.3 847.9 524.9 848.7 523.5 849.6 522.3 850.5 521.1 851.4 519.9 852.4 518.8 853.5 517.8 854.6 516.9 855.7 516.1 856.9 515.3 858.1 514.6 859.4 513.9 860.7 513.4 862.1 512.9 863.5 512.5 864.9 512.1 866.4 511.9 867.9 511.7 869.4 511.6 870.9 511.6 872.5 511.7 874.1 511.8 875.7 512.0 877.4 512.3 879.1 512.7 880.7 513.1 882.4 513.7 884.2 514.3 885.9 515.0 887.6 515.7 889.3 516.5 891.1 517.4 892.8 518.4 894.6 519.4 896.3 520.6 898.1 521.7 899.8 523.0 901.5 524.3 903.2 525.7 904.9 527.1 906.6 528.6 908.3 530.1 909.9 531.7 911.5 533.4 913.1 535.1 914.7 536.9 916.3 538.7 917.8 540.5 919.3 542.4 920.8 544.4 922.2 546.4 923.6 548.4 924.9 550.4 926.3 552.5 927.5 554.6 928.8 556.8 929.9 558.9 931.1 561.1 932.2 563.3 933.2 565.5 934.2 567.7 935.2 570.0 936.1 572.2 936.9 574.5 937.7 576.7 938.5 579.0 939.1 581.2 939.8 583.4 940.3 585.7 940.8 587.9 941.3 590.1 941.7 592.3 942.0 594.5 942.3 596.6 942.5 598.7 942.7 600.8 942.7 602.9 942.8 604.9 942.7 606.9 942.7 608.9 942.5 610.8 942.3 612.7 942.0 614.5 941.7 616.3 941.3 618.0 940.8 619.7 940.3 621.3 939.8 622.9 939.1 624.4 938.5 625.9 937.7 627.3 936.9 628.6 936.1 629.9 935.2 631.1 934.2 632.2 933.2 633.3 932.2 634.3 931.1 635.2 929.9 636.1 928.8 636.9 927.5 637.6 926.3 638.2 924.9 638.8 923.6 639.3 922.2 639.7 920.8 640.0 919.3 640.3 917.8 640.4 916.3 640.5 914.7 640.6 913.1 640.5 911.5 640.4 909.9 640.1 908.3 639.8 906.6 639.5 904.9 639.0 903.2 638.5 901.5 637.9 899.8 637.2 898.1 636.5 896.3 635.6 894.6 634.7 892.8 633.8 891.1 632.7 889.3 631.6 887.6 630.4 885.9 629.2 884.2 627.9 882.4 626.5 880.7 625.1 879.1 623.6 877.4 622.0 875.7 620.4 874.1 618.8 872.5 617.0 870.9 615.3 869.4 613.5 867.9 611.6 866.4 609.7 864.9 607.8 863.5 605.8 862.1 603.8 860.7 601.7 859.4 599.6 858.1 597.5 856.9 595.4 855.7 593.2 854.6 591.1 853.5 588.9 852.4 586.6 851.4 584.4 850.5 582.2 849.6 579.9 848.7 577.7 847.9 575.4 847.2 573.2 846.5 570.9 845.9 568.7 845.3 566.5 844.8 564.3 844.4 562.0 844.0 559.9 843.6 557.7 843.4 555.5 843.2 553.4 843.0 551.3 842.9 549.3 842.9 547.2 M859.8 459.7 861.9 458.6 864.1 457.6 866.3 456.7 868.6 456.0 870.9 455.4 873.3 454.9 875.8 454.6 878.3 454.3 880.8 454.2 883.4 454.3 886.1 454.4 888.8 454.7 891.5 455.2 894.2 455.7 897.0 456.4 899.8 457.2 902.6 458.2 905.5 459.2 908.4 460.4 911.2 461.7 914.1 463.2 917.0 464.7 919.9 466.4 922.8 468.2 925.7 470.1 928.6 472.1 931.4 474.2 934.3 476.4 937.1 478.8 939.9 481.2 942.7 483.7 945.5 486.3 948.2 489.0 950.9 491.8 953.5 494.7 956.1 497.7 958.7 500.7 961.2 503.9 963.6 507.1 966.0 510.3 968.4 513.6 970.6 517.0 972.9 520.4 975.0 523.9 977.1 527.4 979.1 531.0 981.0 534.6 982.9 538.2 984.7 541.9 986.4 545.6 988.0 549.3 989.5 553.0 991.0 556.7 992.3 560.5 993.6 564.2 994.8 567.9 995.9 571.7 996.9 575.4 997.8 579.1 998.6 582.7 999.3 586.4 999.9 590.0 1000.4 593.6 1000.8 597.1 1001.1 600.6 1001.3 604.1 1001.4 607.5 1001.4 610.8 1001.3 614.1 1001.1 617.3 1000.8 620.5 1000.4 623.5 999.9 626.5 999.3 629.5 998.6 632.3 997.8 635.0 996.9 637.7 995.9 640.3 994.8 642.7 993.6 645.1 992.3 647.4 991.0 649.6 989.5 651.6 988.0 653.6 986.4 655.4 984.7 657.1 982.9 658.7 981.0 660.2 979.1 661.6 977.1 662.8 M871.8 452.8 873.9 451.7 876.1 450.7 878.3 449.8 880.6 449.1 882.9 448.5 885.3 448.0 887.8 447.6 890.3 447.4 892.8 447.3 895.4 447.4 898.1 447.5 900.7 447.8 903.5 448.2 906.2 448.8 909.0 449.5 911.8 450.3 914.6 451.2 917.5 452.3 920.4 453.5 923.2 454.8 926.1 456.2 929.0 457.8 931.9 459.5 934.8 461.2 937.7 463.1 940.6 465.2 943.4 467.3 946.3 469.5 949.1 471.8 951.9 474.3 954.7 476.8 957.5 479.4 960.2 482.1 962.9 484.9 965.5 487.8 968.1 490.8 970.7 493.8 973.2 496.9 975.6 500.1 978.0 503.4 980.4 506.7 982.6 510.1 984.9 513.5 987.0 517.0 989.1 520.5 991.1 524.1 993.0 527.7 994.9 531.3 996.7 535.0 998.4 538.7 1000.0 542.4 1001.5 546.1 1003.0 549.8 1004.3 553.5 1005.6 557.3 1006.8 561.0 1007.9 564.7 1008.9 568.4 1009.7 572.1 1010.5 575.8 1011.2 579.5 1011.8 583.1 1012.4 586.7 1012.8 590.2 1013.1 593.7 1013.3 597.1 1013.4 600.5 1013.4 603.9 1013.3 607.2 1013.1 610.4 1012.8 613.5 1012.4 616.6 1011.8 619.6 1011.2 622.5 1010.5 625.4 1009.7 628.1 1008.9 630.8 1007.9 633.4 1006.8 635.8 1005.6 638.2 1004.3 640.5 1003.0 642.6 1001.5 644.7 1000.0 646.6 998.4 648.5 996.7 650.2 994.9 651.8 993.0 653.3 991.1 654.7 989.1 655.9 M876.6 447.3 878.8 446.2 881.0 445.1 883.2 444.3 885.6 443.5 887.9 442.9 890.4 442.4 892.9 442.0 895.4 441.8 898.1 441.7 900.7 441.7 903.4 441.9 906.1 442.2 908.9 442.7 911.7 443.2 914.6 443.9 917.4 444.7 920.3 445.7 923.2 446.8 926.1 448.0 929.1 449.3 932.0 450.8 935.0 452.4 937.9 454.1 940.9 455.9 943.8 457.9 946.8 459.9 949.7 462.1 952.6 464.3 955.5 466.7 958.3 469.2 961.2 471.8 964.0 474.4 966.8 477.2 969.5 480.1 972.2 483.0 974.8 486.0 977.5 489.1 980.0 492.3 982.5 495.6 985.0 498.9 987.4 502.3 989.7 505.7 991.9 509.2 994.1 512.8 996.3 516.4 998.3 520.0 1000.3 523.7 1002.2 527.4 1004.0 531.1 1005.7 534.9 1007.4 538.7 1008.9 542.4 1010.4 546.3 1011.8 550.1 1013.1 553.9 1014.3 557.7 1015.4 561.5 1016.4 565.3 1017.3 569.0 1018.1 572.8 1018.9 576.5 1019.5 580.2 1020.0 583.8 1020.4 587.5 1020.7 591.0 1020.9 594.5 1021.0 598.0 1021.0 601.4 1020.9 604.8 1020.7 608.1 1020.4 611.3 1020.0 614.4 1019.5 617.5 1018.9 620.4 1018.1 623.3 1017.3 626.1 1016.4 628.9 1015.4 631.5 1014.3 634.0 1013.1 636.4 1011.8 638.7 1010.4 640.9 1008.9 643.0 1007.4 645.0 1005.7 646.9 1004.0 648.7 1002.2 650.3 1000.3 651.8 998.3 653.2 996.3 654.5 M878.1 445.9 880.2 444.8 882.4 443.8 884.7 442.9 887.0 442.1 889.4 441.5 891.9 441.0 894.4 440.6 897.0 440.4 899.6 440.3 902.2 440.4 904.9 440.5 907.7 440.8 910.5 441.3 913.3 441.8 916.1 442.5 919.0 443.4 921.9 444.3 924.8 445.4 927.8 446.6 930.7 448.0 933.7 449.5 936.6 451.0 939.6 452.8 942.6 454.6 945.5 456.5 948.5 458.6 951.4 460.8 954.3 463.0 957.2 465.4 960.1 467.9 962.9 470.5 965.8 473.2 968.5 476.0 971.3 478.8 974.0 481.8 976.7 484.8 979.3 487.9 981.8 491.1 984.4 494.4 986.8 497.7 989.2 501.1 991.6 504.6 993.8 508.1 996.0 511.7 998.2 515.3 1000.2 518.9 1002.2 522.6 1004.1 526.3 1005.9 530.1 1007.7 533.9 1009.3 537.6 1010.9 541.5 1012.4 545.3 1013.8 549.1 1015.1 552.9 1016.3 556.7 1017.4 560.6 1018.4 564.4 1019.3 568.1 1020.1 571.9 1020.9 575.6 1021.5 579.3 1022.0 583.0 1022.4 586.6 1022.7 590.2 1022.9 593.8 1023.0 597.2 1023.0 600.7 1022.9 604.0 1022.7 607.3 1022.4 610.5 1022.0 613.7 1021.5 616.8 1020.9 619.8 1020.1 622.7 1019.3 625.5 1018.4 628.2 1017.4 630.8 1016.3 633.4 1015.1 635.8 1013.8 638.1 1012.4 640.3 1010.9 642.5 1009.3 644.4 1007.7 646.3 1005.9 648.1 1004.1 649.7 1002.2 651.3 1000.2 652.7 998.2 653.9 M911.1 428.5 913.2 427.4 915.4 426.4 917.6 425.5 919.9 424.7 922.3 424.1 924.7 423.6 927.2 423.3 929.7 423.1 932.3 423.0 935.0 423.0 937.6 423.2 940.3 423.5 943.1 423.9 945.9 424.5 948.7 425.2 951.5 426.0 954.4 426.9 957.3 428.0 960.2 429.2 963.1 430.5 966.0 432.0 969.0 433.6 971.9 435.2 974.8 437.1 977.7 439.0 980.6 441.0 983.5 443.2 986.4 445.4 989.3 447.8 992.1 450.2 994.9 452.8 997.7 455.4 1000.5 458.2 1003.2 461.0 1005.9 463.9 1008.5 466.9 1011.1 470.0 1013.6 473.2 1016.1 476.4 1018.5 479.7 1020.9 483.1 1023.2 486.5 1025.5 489.9 1027.6 493.5 1029.8 497.0 1031.8 500.6 1033.7 504.3 1035.6 508.0 1037.4 511.7 1039.2 515.4 1040.8 519.1 1042.3 522.9 1043.8 526.7 1045.2 530.5 1046.5 534.2 1047.7 538.0 1048.8 541.8 1049.8 545.5 1050.7 549.3 1051.5 553.0 1052.2 556.7 1052.8 560.4 1053.3 564.0 1053.7 567.6 1054.0 571.1 1054.2 574.6 1054.3 578.0 1054.3 581.4 1054.2 584.7 1054.0 588.0 1053.7 591.2 1053.3 594.3 1052.8 597.3 1052.2 600.3 1051.5 603.2 1050.7 605.9 1049.8 608.6 1048.8 611.2 1047.7 613.7 1046.5 616.1 1045.2 618.4 1043.8 620.6 1042.3 622.7 1040.8 624.7 1039.2 626.5 1037.4 628.3 1035.6 629.9 1033.7 631.4 1031.8 632.8 1029.8 634.1 M1019.3 386.7 1021.0 385.8 1022.9 384.9 1024.8 384.2 1026.8 383.5 1028.8 383.0 1030.8 382.6 1032.9 382.3 1035.1 382.1 1037.3 382.0 1039.5 382.0 1041.8 382.2 1044.1 382.4 1046.4 382.8 1048.8 383.3 1051.2 383.9 1053.6 384.6 1056.0 385.4 1058.5 386.3 1061.0 387.3 1063.4 388.4 1065.9 389.7 1068.4 391.0 1070.9 392.4 1073.4 394.0 1075.9 395.6 1078.3 397.3 1080.8 399.2 1083.2 401.1 1085.7 403.1 1088.1 405.2 1090.5 407.3 1092.8 409.6 1095.2 411.9 1097.5 414.3 1099.8 416.8 1102.0 419.4 1104.2 422.0 1106.3 424.7 1108.5 427.4 1110.5 430.2 1112.5 433.0 1114.5 435.9 1116.4 438.9 1118.2 441.9 1120.0 444.9 1121.8 448.0 1123.4 451.1 1125.0 454.2 1126.6 457.3 1128.0 460.5 1129.4 463.7 1130.7 466.9 1132.0 470.1 1133.1 473.3 1134.2 476.5 1135.2 479.7 1136.2 482.9 1137.0 486.1 1137.8 489.3 1138.5 492.4 1139.1 495.6 1139.6 498.7 1140.0 501.8 1140.4 504.8 1140.6 507.8 1140.8 510.8 1140.9 513.7 1140.9 516.6 1140.8 519.4 1140.6 522.1 1140.4 524.9 1140.0 527.5 1139.6 530.1 1139.1 532.6 1138.5 535.0 1137.8 537.4 1137.0 539.7 1136.2 541.9 1135.2 544.0 1134.2 546.1 1133.1 548.0 1132.0 549.9 1130.7 551.6 1129.4 553.3 1128.0 554.9 1126.6 556.4 1125.0 557.7 1123.4 559.0 1121.8 560.2 1120.0 561.3" fill="none" stroke="#3a3a3a" stroke-width="1.3" stroke-linejoin="round"/>
<g clip-path="url(#boreclip)"><path d="M957.2 612.8 955.5 612.5 953.9 612.2 952.2 611.7 950.5 611.2 948.8 610.6 947.1 609.9 945.3 609.2 943.6 608.3 941.9 607.4 940.1 606.5 938.4 605.4 936.6 604.3 934.9 603.1 933.2 601.9 931.4 600.6 929.7 599.2 928.0 597.8 926.3 596.3 924.7 594.7 923.0 593.1 921.4 591.5 919.8 589.7 918.2 588.0 916.7 586.2 915.1 584.3 913.6 582.4 912.2 580.5 910.8 578.5 909.4 576.5 908.0 574.4 906.7 572.3 905.4 570.2 904.2 568.1 903.0 565.9 901.9 563.8 900.8 561.6 899.7 559.3 898.7 557.1 897.8 554.9 896.9 552.6 896.0 550.4 895.2 548.1 894.5 545.9 893.8 543.6 893.2 541.4 892.6 539.2 892.1 537.0 891.6 534.7 891.3 532.6 890.9 530.4 890.7 528.2 890.4 526.1 890.3 524.0 890.2 522.0 890.2 519.9 890.2 517.9 890.3 516.0 890.4 514.1 890.7 512.2 890.9 510.4 891.3 508.6 891.6 506.8 892.1 505.2 892.6 503.5 893.2 502.0 893.8 500.4 894.5 499.0 895.2 497.6 896.0 496.2 896.9 495.0 897.8 493.8 898.7 492.6 899.7 491.5 900.8 490.5 901.9 489.6 903.0 488.8 904.2 488.0 905.4 487.3 906.7 486.6 908.0 486.1 909.4 485.6 910.8 485.2 912.2 484.8 913.6 484.6 915.1 484.4 M976.5 601.7 974.9 601.4 973.2 601.0 971.5 600.6 969.8 600.0 968.1 599.4 966.4 598.8 964.6 598.0 962.9 597.2 961.2 596.3 959.4 595.3 957.7 594.3 955.9 593.2 954.2 592.0 952.5 590.7 950.8 589.4 949.0 588.0 947.3 586.6 945.7 585.1 944.0 583.6 942.3 582.0 940.7 580.3 939.1 578.6 937.5 576.8 936.0 575.0 934.5 573.2 933.0 571.3 931.5 569.3 930.1 567.3 928.7 565.3 927.3 563.3 926.0 561.2 924.7 559.1 923.5 556.9 922.3 554.8 921.2 552.6 920.1 550.4 919.0 548.2 918.0 546.0 917.1 543.7 916.2 541.5 915.3 539.2 914.5 537.0 913.8 534.7 913.1 532.5 912.5 530.3 911.9 528.0 911.4 525.8 911.0 523.6 910.6 521.4 910.2 519.2 910.0 517.1 909.8 515.0 909.6 512.9 909.5 510.8 909.5 508.8 909.5 506.8 909.6 504.8 909.8 502.9 910.0 501.0 910.2 499.2 910.6 497.4 911.0 495.7 911.4 494.0 911.9 492.4 912.5 490.8 913.1 489.3 913.8 487.8 914.5 486.4 915.3 485.1 916.2 483.8 917.1 482.6 918.0 481.5 919.0 480.4 920.1 479.4 921.2 478.5 922.3 477.6 923.5 476.8 924.7 476.1 926.0 475.5 927.3 474.9 928.7 474.4 930.1 474.0 931.5 473.7 933.0 473.4 934.5 473.3" fill="none" stroke="#3a3a3a" stroke-width="1.3" stroke-linejoin="round"/></g>
<path d="M748.5 497L1083 306.5 M741 497L808.5 533 M1077 303.5L1135.5 338 M792 477.5L816 489.5 M807 532L750 562.4 M757 559L905 626 M799 573L841 549 M805 569L923 654 M899 631L941 607 M917 659L1008 609 M1008 609L1008 592 M878 527L921 551 M1002 598L1046 624 M1024 600L1142 515.6 M1142 502.2L1358 377.8 M1232.1 313.2L1351.1 380.9 M1222 317L1237.5 307.8 M1248.4 341.2L1313.7 377 M1242 331L1245 329 M1279.5 398L1321.5 373.9 M1278 393.3L1301.3 380.1 M1268.6 368.4L1295 382.4" fill="none" stroke="#333" stroke-width="1.05"/>
<text x="909" y="403" font-family="Liberation Sans" font-size="11" fill="#444" text-anchor="middle" transform="rotate(-30 909 399)">100</text>
<text x="798" y="490" font-family="Liberation Sans" font-size="11" fill="#444" text-anchor="middle" transform="rotate(210 798 486.5)">42.55</text>
<text x="1286" y="353.5" font-family="Liberation Sans" font-size="11" fill="#444" text-anchor="middle" transform="rotate(210 1286 350)">Ø36</text>
<text x="1272" y="363.5" font-family="Liberation Sans" font-size="11" fill="#444" text-anchor="middle" transform="rotate(210 1272 360)">Ø25</text>
<text x="847" y="606" font-family="Liberation Sans" font-size="11" fill="#444" text-anchor="middle" transform="rotate(210 847 602)">Ø30</text>
<text x="833" y="615" font-family="Liberation Sans" font-size="11" fill="#444" text-anchor="middle" transform="rotate(210 833 611.5)">Ø50</text>

</svg>
<!-- right panel toggle -->
<div class="btn" style="left:472px;top:49px;width:16px;height:38px;border-radius:3px;border-color:#c8c8c8"></div>
<svg class="a" style="left:475px;top:63px" width="9" height="10"><rect x="0.5" y="1" width="1.6" height="8" fill="#333"/><path d="M8 1L3.5 5 8 9Z" fill="#333"/></svg>

<!-- contact pill -->
<div class="a" style="left:502px;top:49px;width:188px;height:58px;border-radius:29px;border:1px solid #d6d6d6;background:#fff"></div>
<div class="t" style="left:446px;top:59px;width:300px;text-align:center;font-size:16px;line-height:17px;font-weight:700;color:#858585;transform:scaleX(0.625);transform-origin:center">Kontakt für Anfragen:</div>
<div class="t" style="left:446px;top:77px;width:300px;text-align:center;font-size:16px;line-height:17px;color:#d0404a;transform:scaleX(0.666);transform-origin:center;-webkit-text-stroke:0.45px #d0404a">meviy-eu@misumi-europe.com</div>

<!-- toolbar -->
<style>
.tb{position:absolute;top:52px;width:42px;height:42px;border:1px solid #d2d2d2;border-radius:4px;background:linear-gradient(#fefefe,#f0f0f0)}
.tb svg{position:absolute;left:-1px;top:-1px}
</style>
<div class="tb" style="left:714px"><svg width="42" height="42"><g fill="#2a2a2a">
<path d="M21.1 20.9V11.8A9.1 9.1 0 0 0 12 20.9Z"/><path d="M21.1 20.9V30A9.1 9.1 0 0 0 30.2 20.9Z"/></g>
<circle cx="21.1" cy="20.9" r="8.4" fill="none" stroke="#2a2a2a" stroke-width="1.5"/>
<path d="M9 20.9H33M21.1 9V32.8" stroke="#2a2a2a" stroke-width="2"/></svg></div>

<div class="tb" style="left:760px"><svg width="42" height="42"><g fill="#2a2a2a">
<path d="M14.2 20.7L15.3 16.6 24.9 7.6Q26.3 6.4 27.7 7.7 29 9.1 27.8 10.5L18.3 19.6Z"/></g>
<path d="M24.2 8.6L26.8 11.2" stroke="#f4f4f4" stroke-width="0.9"/>
<g stroke="#2a2a2a" fill="none"><path d="M9.7 24.1V33.7M32 24.1V33.7" stroke-width="2"/><path d="M10.7 28.8H31" stroke-width="2"/><path d="M14.5 25.8L11.3 28.8 14.5 31.8M27.2 25.8L30.4 28.8 27.2 31.8" stroke-width="2.1"/></g></svg></div>

<div class="tb" style="left:806px"><svg width="42" height="42">
<path d="M14.6 20.6L20.9 7.8 27.2 20.6M16.7 16.6H25.1" fill="none" stroke="#2a2a2a" stroke-width="1.8" stroke-linejoin="round"/>
<g stroke="#2a2a2a" fill="none"><path d="M9.7 24.1V33.7M32 24.1V33.7" stroke-width="2"/><path d="M10.7 28.8H31" stroke-width="2"/><path d="M14.5 25.8L11.3 28.8 14.5 31.8M27.2 25.8L30.4 28.8 27.2 31.8" stroke-width="2.1"/></g></svg></div>

<div class="tb" style="left:852px"><svg width="42" height="42">
<circle cx="21" cy="15" r="8" fill="#2a2a2a"/><path d="M17.8 11.8L24.2 18.2M24.2 11.8L17.8 18.2" stroke="#fff" stroke-width="1.6"/>
<g stroke="#2a2a2a" fill="none"><path d="M9.7 24.1V33.7M32 24.1V33.7" stroke-width="2"/><path d="M10.7 28.8H31" stroke-width="2"/><path d="M14.5 25.8L11.3 28.8 14.5 31.8M27.2 25.8L30.4 28.8 27.2 31.8" stroke-width="2.1"/></g></svg></div>

<div class="tb" style="left:911px"><svg width="42" height="42">
<ellipse cx="20.6" cy="15.4" rx="6.9" ry="5" transform="rotate(-18 20.6 15.4)" fill="none" stroke="#2a2a2a" stroke-width="3"/><circle cx="21.6" cy="15" r="2.3" fill="none" stroke="#2a2a2a" stroke-width="1.6"/>
<path d="M11.2 8.1L29.4 22.6" stroke="#f4f4f4" stroke-width="2.6"/><path d="M11.2 8.1L29.4 22.6" stroke="#2a2a2a" stroke-width="1.2"/>
<g stroke="#2a2a2a" fill="none"><path d="M9.8 24.1V33.7M32.2 24.1V33.7" stroke-width="2"/><path d="M10.8 28.8H31.2" stroke-width="2"/><path d="M14.6 25.8L11.4 28.8 14.6 31.8M27.4 25.8L30.6 28.8 27.4 31.8" stroke-width="2.1"/></g></svg></div>

<div class="tb" style="left:957px"><svg width="42" height="42">
<rect x="8.2" y="8" width="25.6" height="25.8" rx="2.6" fill="none" stroke="#2a2a2a" stroke-width="2"/>
<g stroke="#2a2a2a" stroke-width="0.5"><path d="M14.5 9V19.5M9 14.2H20M27.5 9V19.5M22 14.2H33M14.5 22V32.8M9 27.3H20M27.5 22V32.8M22 27.3H33"/></g>
<g fill="#fafafa" stroke="#2a2a2a" stroke-width="1.9"><circle cx="14.5" cy="14.2" r="3.8"/><circle cx="27.5" cy="14.2" r="3.8"/><circle cx="14.5" cy="27.3" r="3.8"/></g>
<circle cx="27.5" cy="27.3" r="3.9" fill="#fafafa" stroke="#2a2a2a" stroke-width="1" stroke-dasharray="1.1 0.8"/>
<circle cx="27.5" cy="27.3" r="1.9" fill="none" stroke="#2a2a2a" stroke-width="1.3"/>
<g stroke="#8a8a8a" stroke-width="0.8"><path d="M14.5 12.4V16M12.7 14.2H16.3M27.5 12.4V16M25.7 14.2H29.3M14.5 25.5V29.1M12.7 27.3H16.3"/></g>
<path d="M17.4 20.8H24.4M21.3 17.7L24.5 20.7 21.3 23.7" fill="none" stroke="#2a2a2a" stroke-width="1.9"/></svg></div>

<div class="tb" style="left:1016px"><svg width="42" height="42">
<path d="M19.6 21.1H9L15.25 30.25 26.5 14H32.8" fill="none" stroke="#2a2a2a" stroke-width="1.8" stroke-linejoin="miter"/></svg></div>

<div class="tb" style="left:1075px"><svg width="42" height="42">
<rect x="12" y="9" width="18.2" height="18.2" rx="2.8" fill="none" stroke="#2a2a2a" stroke-width="1.6"/>
<path d="M15.3 23.5L21 12.2 26.6 23.5M17.2 20H24.9" fill="none" stroke="#2a2a2a" stroke-width="1.6"/>
<path d="M20.3 27.5H21.9V30.5L25 33.8H17.2L20.3 30.5Z" fill="#2a2a2a"/></svg></div>

<div class="tb" style="left:1121px"><svg width="42" height="42"><g fill="none" stroke="#2a2a2a" stroke-width="1.6">
<path d="M12.3 9.4H20L16.9 19.4H9.2Z" stroke-linejoin="round"/><path d="M27.4 9.2L23.7 19.5M32.3 9.2L28.6 19.5" stroke-width="1.5"/>
<path d="M14 22.6V32.2M9.4 32.4H18.6" stroke-width="1.7"/><circle cx="27" cy="27.9" r="5.1" stroke-width="1.5"/><circle cx="27" cy="27.9" r="2.1" stroke-width="1.4"/></g></svg></div>

<div class="tb" style="left:1180px"><svg width="42" height="42">
<path d="M19.9 7.2H23V14L21.45 16.4 19.9 14Z" fill="#2a2a2a"/>
<path d="M15.2 9.6L18.2 12.6M27.7 9.6L24.7 12.6M14.3 15L17.7 15.6M28.6 15L25.2 15.6" stroke="#2a2a2a" stroke-width="1.4"/>
<path d="M8.4 23.5L21.4 16.6 34.2 21.8 23.4 28.5Z" fill="#2a2a2a" stroke="#2a2a2a" stroke-width="2" stroke-linejoin="round"/>
<path d="M8.4 23.5V29L23.2 34.2 34.2 26.3V21.8L23.4 28.5Z" fill="#fbfbfb" stroke="#2a2a2a" stroke-width="1.7" stroke-linejoin="round"/>
<path d="M23.3 28.5V34.2" stroke="#2a2a2a" stroke-width="1.6"/>
<path d="M16.2 25.2L23.4 19.6 23.8 25.9M18.6 23.4L23.6 22.9" fill="none" stroke="#fbfbfb" stroke-width="1.4" stroke-linejoin="round"/></svg></div>

<div class="tb" style="left:1239px"><svg width="42" height="42">
<rect x="7.9" y="13" width="26.8" height="17.8" rx="1.3" fill="none" stroke="#2a2a2a" stroke-width="1.8"/>
<g font-family="Liberation Sans" font-size="8.6" font-weight="700" fill="#2a2a2a" text-anchor="middle"><text x="15" y="22.6">1</text><text x="21.5" y="22.6">2</text><text x="28.3" y="22.6">3</text></g>
<path d="M12.4 29.5V24.4M15.8 29.5V26.8M19.2 29.5V24.4M22.6 29.5V26.8M26 29.5V24.4M29.4 29.5V26.8M32.4 29.5V24.4" stroke="#2a2a2a" stroke-width="1.3"/></svg></div>

<div class="tb" style="left:1285px"><svg width="42" height="42"><g stroke="#2a2a2a" stroke-width="2.3" stroke-linecap="round" fill="none">
<path d="M8.8 12.6H24.2M16.5 12.6V30.4M22.8 21.8H33M27.9 21.8V30.4"/></g></svg></div>

<div class="tb" style="left:1331px"><svg width="42" height="42">
<text x="0" y="0" font-family="Liberation Sans" font-size="7.2" font-weight="700" fill="#3a3a3a" text-anchor="middle" transform="translate(20.9 11.2) scale(0.86 1)">6VIEWS</text>
<path d="M14.4 14.2H20.6V20.9H35V27.6H20.6V34.1H14.4V27.6H7.2V20.9H14.4Z" fill="#fff" stroke="#2a2a2a" stroke-width="1.9" stroke-linejoin="round"/>
<path d="M15.3 21.4H19.7M15.3 27.1H19.7M15.3 21.4V27.1M19.7 21.4V27.1M27.5 21.6V24" stroke="#a8a8a8" stroke-width="0.6"/>
<circle cx="30.5" cy="30.3" r="4.9" fill="#fff" stroke="#2a2a2a" stroke-width="1.9"/>
<path d="M29.3 26.8V30.2H27.2L30.5 33.7 33.8 30.2H31.7V26.8Z" fill="#2a2a2a"/></svg></div>

<div class="tb" style="left:1377px;border-color:#ebebeb;background:#fcfcfc"><svg width="42" height="42">
<path d="M11 7.2H26.2L31 12.2V33.1H11Z" fill="none" stroke="#c4c4c4" stroke-width="1.7" stroke-linejoin="round"/>
<rect x="6.4" y="15.2" width="17.4" height="9.3" rx="1.5" fill="#c4c4c4"/>
<text x="15.1" y="23" font-family="Liberation Sans" font-size="8.2" font-weight="700" fill="#fff" text-anchor="middle">DXF</text></svg></div>

<!-- small cube -->
<svg class="a" style="left:1446px;top:61px" width="20" height="20" viewBox="0 0 20 20"><g fill="none" stroke="#333" stroke-width="1.1" stroke-linejoin="round"><path d="M10 1.5L17.5 5.5V14.5L10 18.5 2.5 14.5V5.5Z"/><path d="M2.5 5.5L10 9.5 17.5 5.5M10 9.5V18.5"/></g></svg>

<!-- view cube -->
<svg class="a" style="left:1436px;top:84px" width="146" height="138" viewBox="1436 84 146 138">
 <defs><linearGradient id="cubg" x1="0" y1="0" x2="0" y2="1"><stop offset="0" stop-color="#9a9a9a"/><stop offset="1" stop-color="#8c8c8c"/></linearGradient></defs>
 <path d="M1505 115H1514L1541 130.5 1547 139.5V171.5L1542 180.5 1515 196.5H1504L1477 180.5 1471 171.5V139.5L1477 130.5Z" fill="#959595"/>
 <path d="M1475 136L1509.5 155.5 1544 136V144L1509.5 164 1475 144Z" fill="#9c9c9c"/>
 <path d="M1505.5 164H1513.5V196.5H1505.5Z" fill="#999"/>
 <path d="M1503 150L1509.5 146.5 1516 150V160L1509.5 163.5 1503 160Z" fill="#a7a7a7"/>
 <g font-family="Liberation Sans" font-size="11" fill="#9a9a9a" stroke="#d4d4d4" stroke-width="0.55" text-anchor="middle">
  <text x="1510" y="136" transform="rotate(-30 1510 132)">Top</text>
  <text x="1487" y="172" transform="rotate(30 1487 168)">Left</text>
  <text x="1530" y="172" transform="rotate(-30 1530 168)">Front</text>
 </g>
 <path d="M1509.5 204L1467.5 180" stroke="#39c04a" stroke-width="1"/>
 <path d="M1509.5 204L1551 180" stroke="#f05a5a" stroke-width="1"/>
 <path d="M1509.5 204V157" stroke="#73aaf0" stroke-width="1.6"/>
 <text x="1462" y="180" font-family="Liberation Sans" font-size="8" fill="#39c04a">Y</text>
 <text x="1553" y="180" font-family="Liberation Sans" font-size="8" fill="#f05a5a">X</text>
 <text x="1510" y="158" font-family="Liberation Sans" font-size="8" font-weight="700" fill="#73aaf0" text-anchor="middle">Z</text>
 <path d="M1500 97.5L1507.5 90 1515 97.5Z" fill="#333"/>
 <path d="M1500 210.5L1507.5 218 1515 210.5Z" fill="#333"/>
 <path d="M1450.3 147.5L1442 154.6 1450.3 161.7Z" fill="#333"/>
 <path d="M1568 147.5L1576.3 154.6 1568 161.7Z" fill="#333"/>
 <path d="M1491 85.5Q1480 87 1474.5 95.3L1471.2 93.4 1469.4 104 1480.2 102.6 1477.6 99.6Q1482 93.8 1491 92.6Z" fill="#fff" stroke="#666" stroke-width="1" stroke-linejoin="round"/>
 <path d="M1528 85.5Q1539 87 1544.5 95.3L1547.8 93.4 1549.6 104 1538.8 102.6 1541.4 99.6Q1537 93.8 1528 92.6Z" fill="#fff" stroke="#666" stroke-width="1" stroke-linejoin="round"/>
</svg>

<!-- menu -->
<div class="a" style="left:1520px;top:224px;width:59px;height:24px;border:1.5px solid #555;border-radius:3px;background:#fff"></div>
<div class="t" style="left:1528px;top:227px;color:#333">Menü</div>
<svg class="a" style="left:1566px;top:234px" width="8" height="5"><path d="M0 0H8L4 4.5Z" fill="#444"/></svg>

<!-- bottom text -->
<div class="t" style="left:487px;top:760px;color:#333">Oberflächenrauheit Ra6.3</div>
<div class="t lnk" style="left:656px;top:760px;color:#3a5bd0">Bitte überprüfen Sie für detaillierte Informationen zu den Materialien folgende Seite.</div>
<svg class="a" style="left:1141px;top:762px" width="13" height="13" viewBox="0 0 13 13"><path d="M5.5 2H2V11H11V7.5M7 1.2H11.8V6M11.8 1.2L6 7" fill="none" stroke="#3a5bd0" stroke-width="1.7"/></svg>
<div class="t" style="left:487px;top:781px;color:#333">Die Ecken sind mit C/R 0,1 bis 0,4 mm gefertigt. *für Modelle C/R weniger als 0,5</div>
<div class="t" style="left:487px;top:802px;color:#333">Wenn das Modell keine Nut hat, werden die Ecken des Zylinders mit R0~R0,4 gefertigt *bei Modellen mit R0,5 oder weniger</div>
<div class="t" style="left:487px;top:823px;color:#333">Eine optionale Entlastungsnut ist an der Ecke des Zylinders vorgesehen, an der Wärmebehandlung und Durchmessertoleranz festgelegt sind.</div>
<div class="t" style="left:487px;top:843px;color:#333">JIS B 0405 Mitteltoleranz für Abmessungen des Modells ohne Fasen</div>
<div class="t" style="left:487px;top:864px;color:#333">Weitere Standardtoleranzen (Konzentrizität, Parallelität, Rechtwinkligkeit usw.) <span style="color:#3a5bd0;margin-left:2px">finden Sie auf der Seite mit den technischen Informationen.</span></div>
<svg class="a" style="left:1289px;top:866px" width="13" height="13" viewBox="0 0 13 13"><path d="M5.5 2H2V11H11V7.5M7 1.2H11.8V6M11.8 1.2L6 7" fill="none" stroke="#3a5bd0" stroke-width="1.7"/></svg>

<!-- info links -->
<svg class="a" style="left:1427px;top:844px" width="15" height="15" viewBox="0 0 15 15"><circle cx="7.5" cy="7.5" r="7.5" fill="#1e2126"/><path d="M5.3 5.8C5.3 4.4 6.3 3.6 7.5 3.6 8.8 3.6 9.7 4.4 9.7 5.6 9.7 7 8 7.2 8 8.8" fill="none" stroke="#fff" stroke-width="1.6"/><circle cx="8" cy="11.2" r="1" fill="#fff"/></svg>
<div class="t" style="left:1446px;top:843px;color:#777">Info zu Symbolen</div>
<svg class="a" style="left:1549px;top:846px" width="11" height="11" viewBox="0 0 11 11"><path d="M4.5 1.5H1.3V9.7H9.5V6.5M6 1H10V5M10 1L5 6" fill="none" stroke="#777" stroke-width="1.2"/></svg>
<svg class="a" style="left:1427px;top:865px" width="15" height="15" viewBox="0 0 15 15"><circle cx="7.5" cy="7.5" r="7.5" fill="#1e2126"/><path d="M5.3 5.8C5.3 4.4 6.3 3.6 7.5 3.6 8.8 3.6 9.7 4.4 9.7 5.6 9.7 7 8 7.2 8 8.8" fill="none" stroke="#fff" stroke-width="1.6"/><circle cx="8" cy="11.2" r="1" fill="#fff"/></svg>
<div class="t" style="left:1446px;top:864px;color:#777">Farben des 3D-Modells</div>


<div class="a" style="left:1599px;top:38px;width:1px;height:862px;background:#cfd0dc"></div>
<div class="a" style="left:472px;top:899px;width:1128px;height:1px;background:#cfd0dc"></div>

</body></html>
